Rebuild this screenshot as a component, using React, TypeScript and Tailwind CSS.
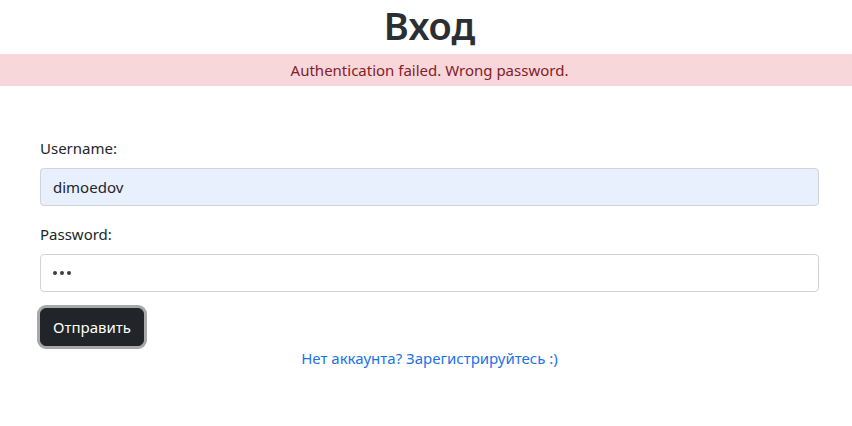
import React from "react";

export default function App() {
  const font = { fontFamily: '"Noto Sans", "Open Sans", sans-serif' };
  return (
    <div className="w-[852px] h-[426px] bg-white text-[#212529]" style={font}>
      <div className="pl-[40px] pr-[33px] h-[54px] flex justify-center items-start">
        <h1 className="text-[38px] leading-[50px] font-semibold text-[#2b2f33]">Вход</h1>
      </div>
      <div className="bg-[#f8d7da] text-[#842029] h-[32px] flex items-center justify-center pl-[40px] pr-[33px] text-[15px] leading-[24px]">
        Authentication failed. Wrong password.
      </div>
      <div className="pl-[40px] pr-[33px] pt-[50px] flex flex-col">
        <label className="text-[15px] leading-[24px] mb-[8px]">Username:</label>
        <div className="h-[38px] rounded-[4px] border border-[#ced4da] bg-[#e8f0fe] px-[12px] flex items-center text-[15px] text-[#212529]">
          dimoedov
        </div>
        <label className="text-[15px] leading-[24px] mt-[16px] mb-[8px]">Password:</label>
        <div className="h-[38px] rounded-[4px] border border-[#ced4da] bg-white px-[12px] flex items-center gap-[3px]">
          <span className="w-[4px] h-[4px] rounded-full bg-[#3a3d40]" />
          <span className="w-[4px] h-[4px] rounded-full bg-[#3a3d40]" />
          <span className="w-[4px] h-[4px] rounded-full bg-[#3a3d40]" />
        </div>
        <div className="mt-[16px] flex">
          <button className="h-[38px] w-[104px] rounded-[6px] bg-[#212529] text-white text-[15px] leading-[24px] border border-[#212529] ring-[3px] ring-[#a6a8a9]">
            Отправить
          </button>
        </div>
        <div className="flex justify-center">
          <a className="text-[#1a73e8] text-[15px] leading-[24px]">Нет аккаунта? Зарегистрируйтесь :)</a>
        </div>
      </div>
    </div>
  );
}
